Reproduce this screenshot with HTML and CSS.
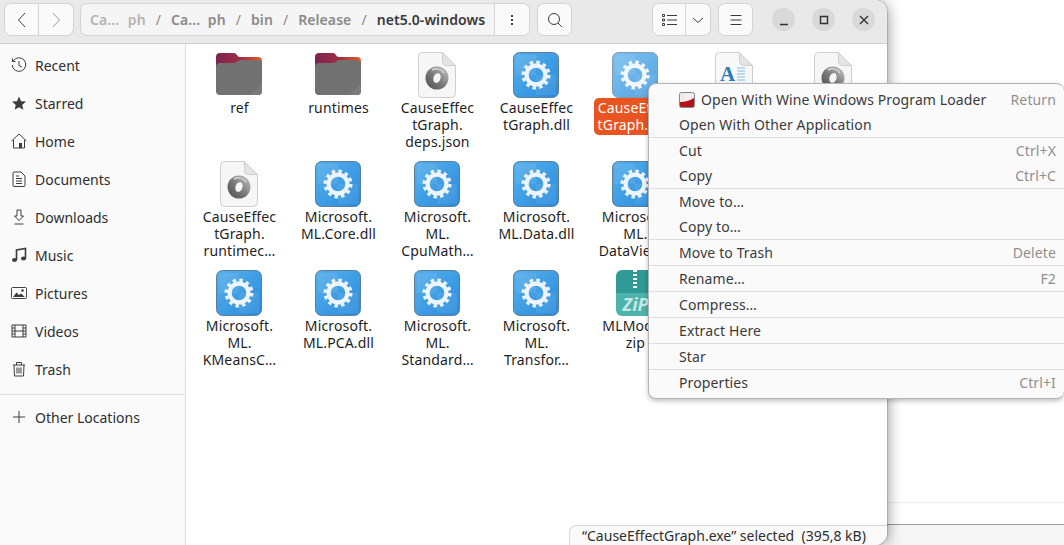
FILE: index.html
```html
<!DOCTYPE html>
<html lang="en">
<head>
<meta charset="utf-8">
<title>net5.0-windows</title>
<link rel="stylesheet" href="styles.css">
</head>
<body>
<svg class="defs" width="0" height="0" aria-hidden="true">
  <defs>
    <linearGradient id="folderTop" x1="0" y1="0" x2="1" y2="0">
      <stop offset="0" stop-color="#7e2251"/><stop offset=".55" stop-color="#a0303f"/><stop offset="1" stop-color="#e9591f"/>
    </linearGradient>
    <linearGradient id="tile" x1="0" y1="0" x2="1" y2="1">
      <stop offset="0" stop-color="#55b0ec"/><stop offset="1" stop-color="#2a8bdc"/>
    </linearGradient>
    <linearGradient id="ring" x1="0" y1="1" x2="1" y2="0">
      <stop offset="0" stop-color="#4f4f4f"/><stop offset=".45" stop-color="#777"/><stop offset="1" stop-color="#c8c8c8"/>
    </linearGradient>
    <symbol id="folder" viewBox="0 0 46 46">
      <path d="M0 5a4 4 0 0 1 4-4h14c3 0 3 4 6 4h18a4 4 0 0 1 4 4v26H0z" fill="url(#folderTop)"/>
      <path d="M0 15a4 4 0 0 1 4-4h14c3 0 4-3 7-3h17a4 4 0 0 1 4 4v27a4 4 0 0 1-4 4H4a4 4 0 0 1-4-4z" fill="#717171"/>
      <path d="M46 31v8a4 4 0 0 1-4 4H34z" fill="#7a7a7a"/>
    </symbol>
    <symbol id="gear" viewBox="0 0 46 46">
      <rect x=".5" y=".5" width="45" height="45" rx="6" fill="url(#tile)" stroke="#5d7f99"/>
      <path d="M3 3h20v20H3z M23 23h20v20H23z" fill="#fff" opacity=".08"/>
      <circle cx="23" cy="23" r="9.400" fill="none" stroke="#eef5fa" stroke-width="4.200"/>
      <circle cx="23" cy="23" r="12.800" fill="none" stroke="#eef5fa" stroke-width="3.400" stroke-dasharray="3.400 3.302"/>
    </symbol>
    <symbol id="json" viewBox="0 0 38 46">
      <path d="M4.500 .5h20l13 13v28a4 4 0 0 1-4 4h-29a4 4 0 0 1-4-4v-37a4 4 0 0 1 4-4z" fill="#f6f6f6" stroke="#cfcfcf"/>
      <path d="M24.500 .5v9a4 4 0 0 0 4 4h9z" fill="#e4e4e4" stroke="#cfcfcf"/>
      <circle cx="19" cy="26" r="11.500" fill="url(#ring)"/>
      <path d="M14 18a9 9 0 0 1 12 3" fill="none" stroke="#d8d8d8" stroke-width="1.500"/>
      <ellipse cx="19" cy="26" rx="3.500" ry="5" fill="#f6f6f6" transform="rotate(20 19 26)"/>
    </symbol>
    <symbol id="doc" viewBox="0 0 38 46">
      <path d="M4.500 .5h20l13 13v28a4 4 0 0 1-4 4h-29a4 4 0 0 1-4-4v-37a4 4 0 0 1 4-4z" fill="#f8f8f8" stroke="#cfcfcf"/>
      <path d="M24.500 .5v9a4 4 0 0 0 4 4h9z" fill="#e4e4e4" stroke="#cfcfcf"/>
      <path d="M22 16h8M22 19h8M22 22h8M22 25h8M22 28h8" stroke="#7fbbe6" stroke-width="1"/>
      <text x="5" y="29" class="doc-glyph">A</text>
    </symbol>
  </defs>
</svg>

<main class="window">
  <header class="headerbar">
    <div class="btn-group nav-group">
      <button class="btn nav-btn"><svg width="16" height="16" viewBox="0 0 16 16"><path d="M11 1L4.500 8l6.500 7" class="stroke-dark"/></svg></button>
      <button class="btn nav-btn"><svg width="16" height="16" viewBox="0 0 16 16"><path d="M5 1l6.500 7L5 15" class="stroke-faint"/></svg></button>
    </div>
    <nav class="pathbar">
      <div class="crumbs">
        <span class="crumb first">Ca... ph</span><span class="slash">/</span>
        <span class="crumb second">Ca... ph</span><span class="slash">/</span>
        <span class="crumb">bin</span><span class="slash">/</span>
        <span class="crumb">Release</span><span class="slash">/</span>
        <span class="crumb current">net5.0-windows</span>
      </div>
      <button class="path-menu"><svg width="16" height="16" viewBox="0 0 16 16"><path d="M7 3h2v2H7zM7 7h2v2H7zM7 11h2v2H7z" fill="#3d3d3d"/></svg></button>
    </nav>
    <button class="btn search-btn"><svg width="16" height="16" viewBox="0 0 16 16"><circle cx="7" cy="7" r="5.500" class="stroke-dark"/><path d="M11 11l4 4" class="stroke-dark"/></svg></button>
    <div class="spring"></div>
    <div class="btn-group view-group">
      <button class="btn view-btn"><svg width="16" height="16" viewBox="0 0 16 16"><path d="M1.500 2.500h2v2h-2zM1.500 7h2v2h-2zM1.500 11.500h2v2h-2zM6 3.500h10M6 8h10M6 12.500h10" class="stroke-dark"/></svg></button>
      <button class="btn view-drop"><svg width="12" height="12" viewBox="0 0 12 12"><path d="M1 4l5 4.500L11 4" class="stroke-dark"/></svg></button>
    </div>
    <button class="btn menu-btn"><svg width="16" height="16" viewBox="0 0 16 16"><path d="M0 3.500h11M0 8h11M0 12.500h11" class="stroke-dark" transform="translate(2.500 0)"/></svg></button>
    <div class="win-controls">
      <span class="win-btn"><svg width="12" height="12" viewBox="0 0 12 12"><path d="M2 10.500h8" class="stroke-strong"/></svg></span>
      <span class="win-btn"><svg width="12" height="12" viewBox="0 0 12 12"><path d="M2.500 2.500h7v7h-7z" class="stroke-strong"/></svg></span>
      <span class="win-btn"><svg width="12" height="12" viewBox="0 0 12 12"><path d="M2 2l8 8M10 2l-8 8" class="stroke-strong"/></svg></span>
    </div>
  </header>

  <div class="body-row">
    <aside class="sidebar">
      <ul class="places">
        <li class="place"><svg class="place-icon" viewBox="0 0 16 16"><path d="M2.200 4A6.800 6.800 0 1 1 1.200 8" class="stroke-dark"/><path d="M1.500 1.500V4.500H4.500M8 4v4.500l3 1.500" class="stroke-dark"/></svg>Recent</li>
        <li class="place"><svg class="place-icon" viewBox="0 0 16 16"><path d="M8 1.500l2 4.700 5 .4-3.800 3.300 1.200 4.900L8 12.200l-4.400 2.600 1.200-4.900L1 6.600l5-.4z" fill="#3d3d3d"/></svg>Starred</li>
        <li class="place"><svg class="place-icon" viewBox="0 0 16 16"><path d="M.5 8L8 1l7.500 7M2.500 7v8h11V7" class="stroke-dark"/><path d="M8 10h3v5H8z" fill="#3d3d3d"/></svg>Home</li>
        <li class="place"><svg class="place-icon" viewBox="0 0 16 16"><path d="M3 1h7l4 4v9.500a1 1 0 0 1-1 1H3a1 1 0 0 1-1-1V2a1 1 0 0 1 1-1zM5 7.500h6M5 10h6M5 12.500h6M5 5h3" class="stroke-dark"/></svg>Documents</li>
        <li class="place"><svg class="place-icon" viewBox="0 0 16 16"><path d="M6 1h4v6h2.500L8 11.500 3.500 7H6zM3.500 15h9" class="stroke-dark"/></svg>Downloads</li>
        <li class="place"><svg class="place-icon" viewBox="0 0 16 16"><path d="M5.500 13V3l9-1.500V11.500" class="stroke-thick"/><ellipse cx="3.500" cy="13" rx="2.500" ry="2" fill="#3d3d3d"/><ellipse cx="12.500" cy="11.500" rx="2.500" ry="2" fill="#3d3d3d"/></svg>Music</li>
        <li class="place"><svg class="place-icon" viewBox="0 0 16 16"><path d="M1 2.500h14a1 1 0 0 1 1 1v9a1 1 0 0 1-1 1H1a1 1 0 0 1-1-1v-9a1 1 0 0 1 1-1z" transform="translate(.5 0) scale(.94 1)" class="stroke-dark"/><path d="M2 12l3.500-4.500L8 10l2-1.500L14 12z" fill="#3d3d3d"/><circle cx="11.500" cy="5.500" r="1.300" fill="#3d3d3d"/></svg>Pictures</li>
        <li class="place"><svg class="place-icon" viewBox="0 0 16 16"><path d="M1 2h14v12H1zM4 2v12M12 2v12M4 8h8M1 5h3M1 8h3M1 11h3M12 5h3M12 8h3M12 11h3" class="stroke-dark"/></svg>Videos</li>
        <li class="place"><svg class="place-icon" viewBox="0 0 16 16"><path d="M2 4h12M5.500 4V1.500h5V4M3 4l.500 11h9L13 4M6 6.500v6M8 6.500v6M10 6.500v6" class="stroke-dark"/></svg>Trash</li>
        <li class="place other"><svg class="place-icon" viewBox="0 0 16 16"><path d="M8 2v12M2 8h12" class="stroke-dark"/></svg>Other Locations</li>
      </ul>
    </aside>

    <section class="files">
      <article class="item"><svg class="icon" viewBox="0 0 46 46"><use href="#folder"/></svg><p class="label">ref</p></article>
      <article class="item"><svg class="icon" viewBox="0 0 46 46"><use href="#folder"/></svg><p class="label">runtimes</p></article>
      <article class="item"><svg class="icon" viewBox="0 0 38 46"><use href="#json"/></svg><p class="label">CauseEffec<br>tGraph.<br>deps.json</p></article>
      <article class="item"><svg class="icon" viewBox="0 0 46 46"><use href="#gear"/></svg><p class="label">CauseEffec<br>tGraph.dll</p></article>
      <article class="item"><svg class="icon icon-selected" viewBox="0 0 46 46"><use href="#gear"/></svg><p class="label selected">CauseEffec<br>tGraph.exe</p></article>
      <article class="item"><svg class="icon" viewBox="0 0 38 46"><use href="#doc"/></svg><p class="label"></p></article>
      <article class="item"><svg class="icon" viewBox="0 0 38 46"><use href="#json"/></svg><p class="label"></p></article>

      <article class="item"><svg class="icon" viewBox="0 0 38 46"><use href="#json"/></svg><p class="label">CauseEffec<br>tGraph.<br>runtimec…</p></article>
      <article class="item"><svg class="icon" viewBox="0 0 46 46"><use href="#gear"/></svg><p class="label">Microsoft.<br>ML.Core.dll</p></article>
      <article class="item"><svg class="icon" viewBox="0 0 46 46"><use href="#gear"/></svg><p class="label">Microsoft.<br>ML.<br>CpuMath…</p></article>
      <article class="item"><svg class="icon" viewBox="0 0 46 46"><use href="#gear"/></svg><p class="label">Microsoft.<br>ML.Data.dll</p></article>
      <article class="item"><svg class="icon" viewBox="0 0 46 46"><use href="#gear"/></svg><p class="label">Microsoft.<br>ML.<br>DataView…</p></article>
      <div class="item"></div>
      <div class="item"></div>

      <article class="item"><svg class="icon" viewBox="0 0 46 46"><use href="#gear"/></svg><p class="label">Microsoft.<br>ML.<br>KMeansC…</p></article>
      <article class="item"><svg class="icon" viewBox="0 0 46 46"><use href="#gear"/></svg><p class="label">Microsoft.<br>ML.PCA.dll</p></article>
      <article class="item"><svg class="icon" viewBox="0 0 46 46"><use href="#gear"/></svg><p class="label">Microsoft.<br>ML.<br>Standard…</p></article>
      <article class="item"><svg class="icon" viewBox="0 0 46 46"><use href="#gear"/></svg><p class="label">Microsoft.<br>ML.<br>Transfor…</p></article>
      <article class="item"><div class="zip"><span class="zipper"></span><span class="zip-band">ZiP</span></div><p class="label">MLModel.<br>zip</p></article>
    </section>
  </div>
  <div class="status">“CauseEffectGraph.exe” selected&nbsp; (395,8 kB)</div>
</main>

<div class="behind"><div class="behind-line"></div><div class="behind-foot"></div></div>

<div class="menu">
  <div class="menu-section">
    <div class="mi"><span class="mi-label"><svg class="wine" width="16" height="16" viewBox="0 0 16 16"><rect x=".5" y=".5" width="15" height="15" rx="2" fill="#f2ecec" stroke="#888"/><path d="M1 10c4 0 9-1 14-4v8a1 1 0 0 1-1 1H2a1 1 0 0 1-1-1z" fill="#b5101e"/></svg>Open With Wine Windows Program Loader</span><span class="mi-key">Return</span></div>
    <div class="mi"><span class="mi-label">Open With Other Application</span></div>
  </div>
  <div class="menu-section">
    <div class="mi"><span class="mi-label">Cut</span><span class="mi-key">Ctrl+X</span></div>
    <div class="mi"><span class="mi-label">Copy</span><span class="mi-key">Ctrl+C</span></div>
  </div>
  <div class="menu-section">
    <div class="mi"><span class="mi-label">Move to…</span></div>
    <div class="mi"><span class="mi-label">Copy to…</span></div>
  </div>
  <div class="menu-section">
    <div class="mi"><span class="mi-label">Move to Trash</span><span class="mi-key">Delete</span></div>
  </div>
  <div class="menu-section">
    <div class="mi"><span class="mi-label">Rename…</span><span class="mi-key">F2</span></div>
  </div>
  <div class="menu-section">
    <div class="mi"><span class="mi-label">Compress…</span></div>
  </div>
  <div class="menu-section">
    <div class="mi"><span class="mi-label">Extract Here</span></div>
  </div>
  <div class="menu-section">
    <div class="mi"><span class="mi-label">Star</span></div>
  </div>
  <div class="menu-section">
    <div class="mi"><span class="mi-label">Properties</span><span class="mi-key">Ctrl+I</span></div>
  </div>
</div>
</body>
</html>
```

FILE: styles.css
```css
* { box-sizing: border-box; }
html, body { margin: 0; height: 100%; overflow: hidden; }
body {
  display: flex;
  width: 1064px;
  height: 545px;
  background: #fff;
  font-family: "Noto Sans", "Open Sans", sans-serif;
  font-size: 14px;
  color: #2f2f2f;
}
.defs { position: absolute; }
button { font: inherit; color: inherit; padding: 0; margin: 0; }
svg { display: block; }
.stroke-dark { fill: none; stroke: #3d3d3d; stroke-width: 1; }
.stroke-faint { fill: none; stroke: #a0a0a0; stroke-width: 1; }
.stroke-strong { fill: none; stroke: #333; stroke-width: 1.4; }
.stroke-thick { fill: none; stroke: #3d3d3d; stroke-width: 1.6; }
.doc-glyph {
  font-family: "Liberation Serif", serif;
  font-size: 21px;
  font-weight: 700;
  fill: #2a7ab8;
}

.window {
  position: relative;
  z-index: 1;
  flex: 0 0 887px;
  height: 545px;
  display: flex;
  flex-direction: column;
  background: #fff;
  border-top-right-radius: 12px;
  border-bottom-right-radius: 12px;
  box-shadow: 0 0 2px rgba(0,0,0,.55), 2px 2px 14px rgba(0,0,0,.35);
  overflow: hidden;
}

.headerbar {
  flex: 0 0 44px;
  display: flex;
  align-items: flex-start;
  padding: 3px 0 0 4px;
  background: #e9e9e9;
  border-bottom: 1px solid #cdcdcd;
}
.btn {
  height: 33px;
  display: flex;
  align-items: center;
  justify-content: center;
  background: #fafafa;
  border: 1px solid #d4d4d4;
  border-radius: 7px;
}
.btn-group { display: flex; }
.btn-group .btn:first-child { border-radius: 7px 0 0 7px; }
.btn-group .btn:last-child { border-radius: 0 7px 7px 0; border-left: 0; }
.nav-btn { width: 35px; }
.pathbar {
  flex: 0 0 450px;
  height: 33px;
  margin-left: 6px;
  display: flex;
  background: #f5f5f5;
  border: 1px solid #d4d4d4;
  border-radius: 7px;
}
.crumbs {
  flex: 1;
  display: flex;
  align-items: center;
  padding-left: 9px;
  white-space: nowrap;
  font-weight: 600;
  letter-spacing: .08px;
  color: #8a8a8a;
}
.crumb.first { word-spacing: 5px; color: #b4b4b4; }
.crumb.second { word-spacing: 4px; }
.crumb.current { color: #3a3a3a; }
.slash { margin: 0 10px; font-weight: 400; }
.path-menu {
  flex: 0 0 35px;
  display: flex;
  align-items: center;
  justify-content: center;
  background: #fafafa;
  border: 0;
  border-left: 1px solid #d4d4d4;
  border-radius: 0 7px 7px 0;
}
.search-btn { width: 35px; margin-left: 7px; }
.spring { flex: 1; }
.view-btn { width: 34px; }
.view-drop { width: 25px; }
.menu-btn { width: 35px; margin-left: 7px; }
.win-controls {
  display: flex;
  gap: 17px;
  margin: 5px 12px 0 19px;
}
.win-btn {
  width: 23px;
  height: 23px;
  border-radius: 50%;
  background: #d9d9d9;
  display: flex;
  align-items: center;
  justify-content: center;
}

.body-row { flex: 1; display: flex; min-height: 0; }
.sidebar {
  flex: 0 0 186px;
  background: #fafafa;
  border-right: 1px solid #dedede;
  padding-top: 2px;
}
.places { list-style: none; margin: 0; padding: 0; }
.place {
  height: 38px;
  display: flex;
  align-items: center;
  gap: 8px;
  padding-left: 11px;
  color: #2f2f2f;
}
.place-icon { width: 16px; height: 16px; flex: none; }
.place.other {
  height: 45px;
  margin-top: 6px;
  border-top: 1px solid #dedede;
}

.files {
  flex: 1;
  display: grid;
  grid-template-columns: repeat(7, 99px);
  grid-auto-rows: 109px;
  padding: 8px 0 0 3px;
  align-content: start;
  overflow: hidden;
}
.item { display: flex; flex-direction: column; align-items: center; }
.icon { width: auto; height: 46px; flex: none; }
.icon-selected { opacity: .78; }
.label {
  margin: 0;
  padding: 1px 3px 2px 5px;
  text-align: center;
  line-height: 17px;
  letter-spacing: .15px;
  color: #1e1e1e;
  white-space: nowrap;
}
.label.selected {
  padding: 1px 4px 2px;
  background: #e95420;
  color: #fff;
  border-radius: 5px;
}
.zip {
  width: 38px;
  height: 46px;
  flex: none;
  position: relative;
  border-radius: 6px;
  overflow: hidden;
  background: linear-gradient(180deg, #2f9a96 0 50%, #4db3aa 50% 100%);
}
.zipper {
  position: absolute;
  left: 17px;
  top: 0;
  width: 4px;
  height: 19px;
  background: repeating-linear-gradient(180deg, #fff 0 2px, #2f9a96 2px 4px);
}
.zip-band {
  position: absolute;
  left: 7px;
  top: 24px;
  font-size: 18px;
  line-height: 20px;
  font-weight: 700;
  font-style: italic;
  color: #c6e8e4;
}

.status {
  position: absolute;
  right: 0;
  bottom: 0;
  width: 318px;
  height: 20px;
  padding-left: 12px;
  line-height: 20px;
  background: #fafafa;
  border: 1px solid #d8d8d8;
  border-width: 1px 0 0 1px;
  border-top-left-radius: 7px;
  color: #2f2f2f;
  white-space: nowrap;
}

.behind { flex: 1; display: flex; flex-direction: column; background: #fff; }
.behind-line { height: 503px; border-bottom: 1px solid #ececec; }
.behind-foot { height: 21px; }
.behind::after { content: ""; flex: 1; background: #f6f6f6; border-top: 1px solid #9d9d9d; }

.menu {
  position: absolute;
  z-index: 2;
  left: 648px;
  top: 83px;
  width: 416px;
  padding: 3px 0;
  background: #fafafa;
  border: 1px solid #b4b4b4;
  border-right: 0;
  border-radius: 8px;
  box-shadow: 0 2px 5px rgba(0,0,0,.25);
  overflow: hidden;
}
.menu-section + .menu-section { border-top: 1px solid #dedede; }
.mi {
  height: 25px;
  display: flex;
  align-items: center;
  justify-content: space-between;
  padding: 0 8px 0 30px;
  letter-spacing: .12px;
  color: #3a3a3a;
}
.mi-label { display: flex; align-items: center; gap: 6px; }
.mi-key { color: #8f8f8f; }
```
